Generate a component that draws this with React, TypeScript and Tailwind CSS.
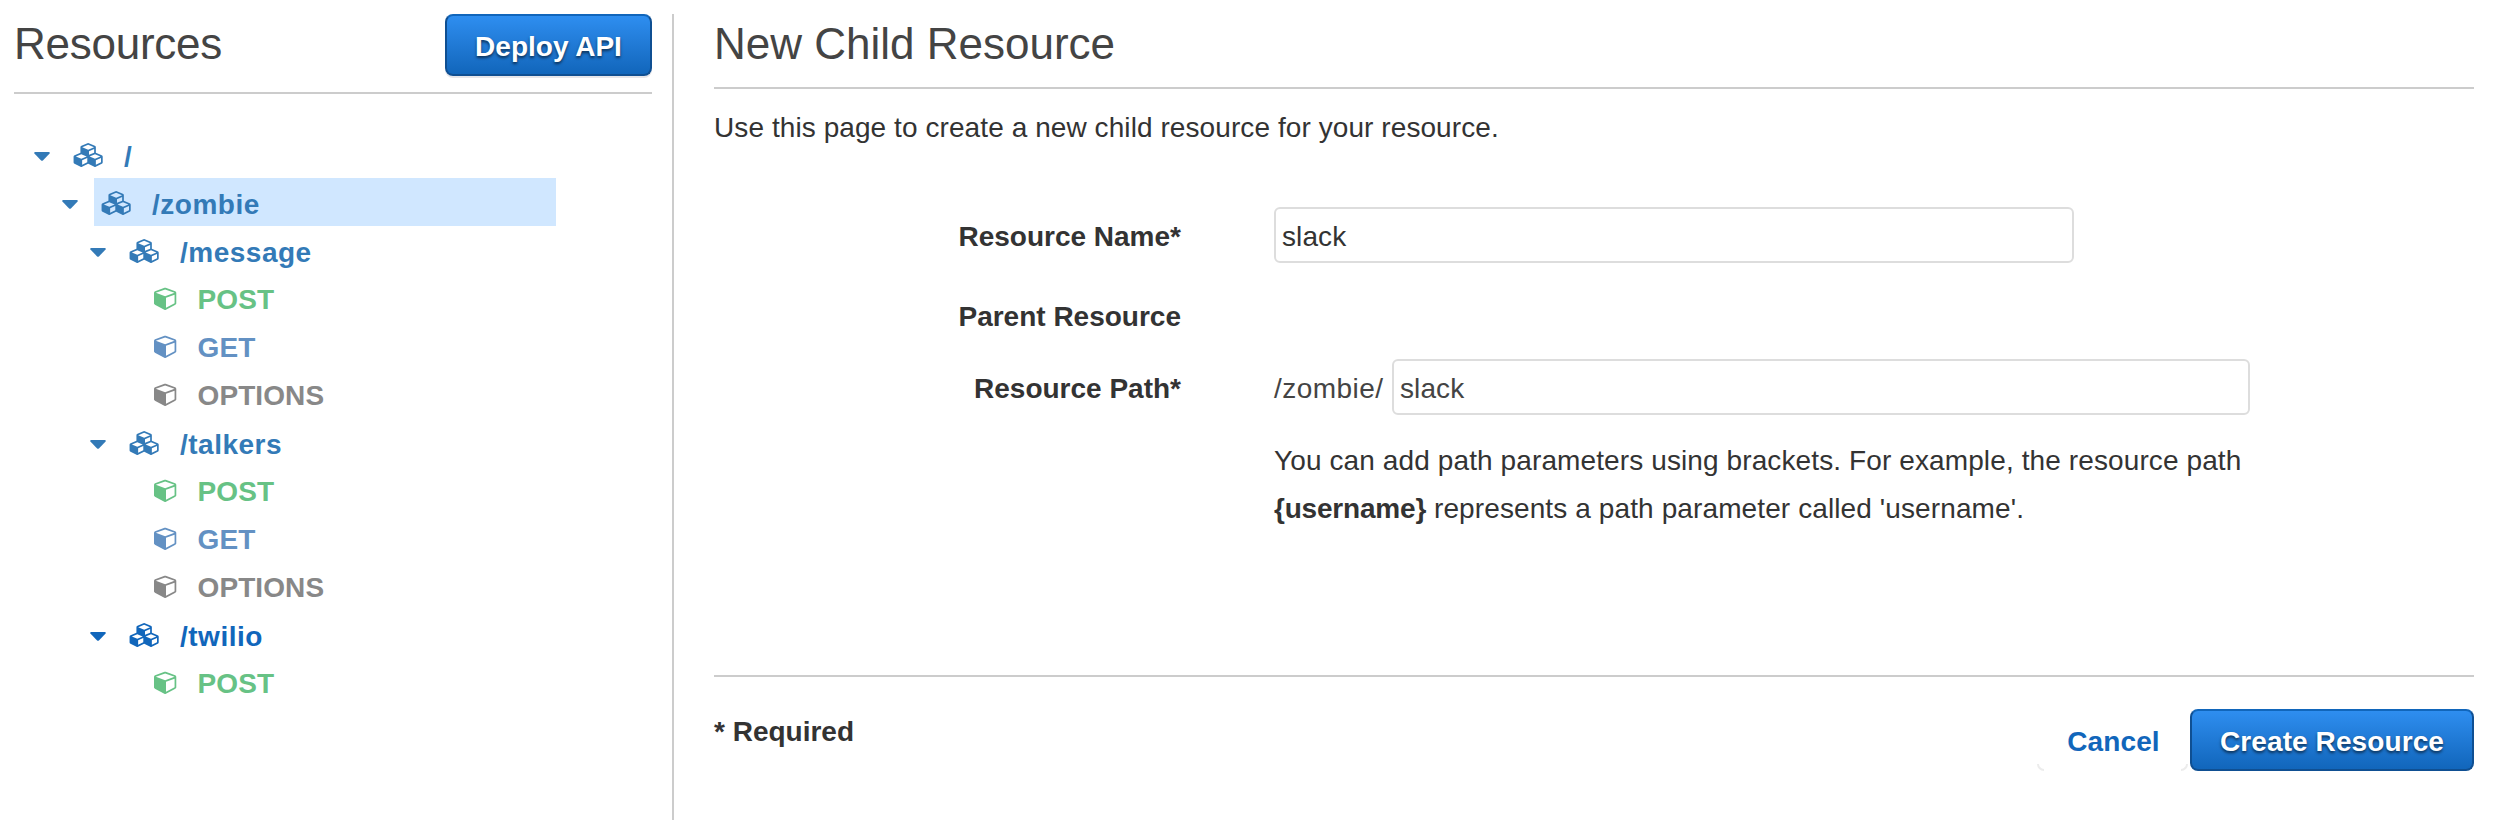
import type { ReactNode } from "react";

function Cube() {
  return (
    <svg viewBox="0 0 1792 1792" className="size-6 shrink-0" fill="currentColor" aria-hidden="true">
      <path d="M896 1629l640-349v-636l-640 233v752zm-64-865l698-254-698-254-698 254zm832-252v768q0 35-18 65t-49 47l-704 384q-28 16-61 16t-61-16l-704-384q-31-17-49-47t-18-65v-768q0-40 23-73t61-47l704-256q22-8 44-8t44 8l704 256q38 14 61 47t23 73z" />
    </svg>
  );
}

function Cubes() {
  return (
    <svg viewBox="0 0 2304 1792" className="h-6 w-8 shrink-0" fill="currentColor" aria-hidden="true">
      <path d="M640 1632l384-192v-314l-384 164v342zm-64-454l404-173-404-173-404 173zm1088 454l384-192v-314l-384 164v342zm-64-454l404-173-404-173-404 173zm-448-293l384-165v-266l-384 164v267zm-64-379l441-189-441-189-441 189zm1088 518v416q0 36-19 67t-52 47l-448 224q-25 14-57 14t-57-14l-448-224q-4-2-7-4-2 2-7 4l-448 224q-25 14-57 14t-57-14l-448-224q-33-16-52-47t-19-67v-416q0-38 21.5-70t56.5-48l434-186v-400q0-38 21.5-70t56.5-48l448-192q23-10 50-10t50 10l448 192q35 16 56.5 48t21.5 70v400l434 186q36 16 57 48t21 70z" />
    </svg>
  );
}

function Caret() {
  return (
    <svg viewBox="0 0 16 9" className="mt-[5px] h-[9px] w-4 shrink-0" fill="currentColor" aria-hidden="true">
      <path d="M1 0h14q1.400 .6 .6 1.600l-6.700 6.800q-.9 .8-1.800 0L.4 1.600Q-.4 .6 1 0z" />
    </svg>
  );
}

function ResourceRow({ path, indent, color, selected }: { path: string; indent: string; color: string; selected?: boolean }) {
  return (
    <div className={`flex h-12 items-center ${indent} ${color}`}>
      <Caret />
      <div className={`ml-4 flex h-12 items-center pl-[7px] ${selected ? "w-[462px] bg-[#d0e7ff]" : ""}`}>
        <span className="pt-px"><Cubes /></span>
        <span className="ml-[19px] pt-[5px] tracking-[0.5px]">{path}</span>
      </div>
    </div>
  );
}

function MethodRow({ name, color }: { name: string; color: string }) {
  return (
    <div className={`flex h-12 items-center pl-[154px] ${color}`}>
      <Cube />
      <span className="ml-[19.5px] pt-[3px] tracking-[0.1px]">{name}</span>
    </div>
  );
}

function PrimaryButton({ children, className }: { children: ReactNode; className: string }) {
  return (
    <button
      className={`h-[62px] rounded-[8px] border-2 border-[#0f4f92] border-t-[#1166bb] bg-linear-to-b from-[#2e8ef0] to-[#1166bb] pt-[3px] font-bold text-white [text-shadow:0_2px_3px_rgba(0,0,0,0.6)] ${className}`}
    >
      {children}
    </button>
  );
}

function FieldLabel({ children }: { children: ReactNode }) {
  return <label className="w-[467px] shrink-0 pt-[3px] text-right font-bold">{children}</label>;
}

const green = "text-[#67c285]";
const steel = "text-[#6391c3]";
const gray = "text-[#888888]";
const link = "text-[#337ab7]";

export default function App() {
  return (
    <div className="flex h-[820px] w-[2518px] overflow-hidden bg-white pt-[14px] font-['Liberation_Sans',Arial,sans-serif] text-[28px] leading-[48px] text-[#333333]">
      <aside className="w-[672px] shrink-0">
        <header className="ml-[14px] flex h-20 w-[638px] items-start justify-between border-b-2 border-[#cccccc]">
          <h1 className="pt-[5px] text-[44px] leading-[50px] tracking-[-0.25px] text-[#444444]">Resources</h1>
          <PrimaryButton className="w-[207px] shadow-[0_2px_0_#e6e6ea]">Deploy API</PrimaryButton>
        </header>
        <nav className="pt-9 font-bold">
          <ResourceRow path="/" indent="pl-[34px]" color={link} />
          <ResourceRow path="/zombie" indent="pl-[62px]" color={link} selected />
          <ResourceRow path="/message" indent="pl-[90px]" color={link} />
          <MethodRow name="POST" color={green} />
          <MethodRow name="GET" color={steel} />
          <MethodRow name="OPTIONS" color={gray} />
          <ResourceRow path="/talkers" indent="pl-[90px]" color={link} />
          <MethodRow name="POST" color={green} />
          <MethodRow name="GET" color={steel} />
          <MethodRow name="OPTIONS" color={gray} />
          <ResourceRow path="/twilio" indent="pl-[90px]" color="text-[#1166bb]" />
          <MethodRow name="POST" color={green} />
        </nav>
      </aside>
      <main className="w-[1802px] border-l-2 border-[#cccccc] pl-10">
        <h2 className="h-[75px] border-b-2 border-[#cccccc] pt-[5px] text-[44px] leading-[50px] text-[#444444]">New Child Resource</h2>
        <p className="h-[62px] pt-[15px] tracking-[0.08px]">Use this page to create a new child resource for your resource.</p>
        <form className="h-[526px] border-b-2 border-[#cccccc] pt-14">
          <div className="flex h-14 items-center">
            <FieldLabel>Resource Name*</FieldLabel>
            <input className="ml-[93px] h-14 w-[800px] rounded-[6px] border-2 border-[#dddddd] px-[6px] pt-[3px] tracking-[0.1px] outline-none" defaultValue="slack" />
          </div>
          <div className="mt-7 flex h-12 items-center">
            <FieldLabel>Parent Resource</FieldLabel>
          </div>
          <div className="mt-5 flex h-14 items-center">
            <FieldLabel>Resource Path*</FieldLabel>
            <span className="ml-[93px] w-[118px] pt-[3px] tracking-[0.45px] text-[#444444]">/zombie/</span>
            <input className="h-14 w-[858px] rounded-[6px] border-2 border-[#dddddd] px-[6px] pt-[3px] tracking-[0.1px] text-[#444444] outline-none" defaultValue="slack" />
          </div>
          <p className="mt-[22px] ml-[560px] w-[990px] tracking-[0.11px]">
            You can add path parameters using brackets. For example, the resource path
            <br />
            <b className="tracking-[-0.2px]">{"{username}"}</b>
            <span className="tracking-[0.11px]"> represents a path parameter called 'username'.</span>
          </p>
        </form>
        <footer className="flex justify-between pt-8">
          <b className="-mt-px">* Required</b>
          <div className="flex">
            <button className="relative h-[62px] w-[153px] pt-[3px] font-bold tracking-[0.1px] text-[#1166bb]">
              Cancel
              <span className="absolute bottom-0 left-0 h-[7px] w-[7px] rounded-bl-[7px] border-b-2 border-l-2 border-[#ececec]" />
              <span className="absolute right-0.5 bottom-0 h-[7px] w-[7px] rounded-br-[7px] border-r-2 border-b-2 border-[#ececec]" />
            </button>
            <PrimaryButton className="w-[284px] tracking-[0.1px]">Create Resource</PrimaryButton>
          </div>
        </footer>
      </main>
    </div>
  );
}
